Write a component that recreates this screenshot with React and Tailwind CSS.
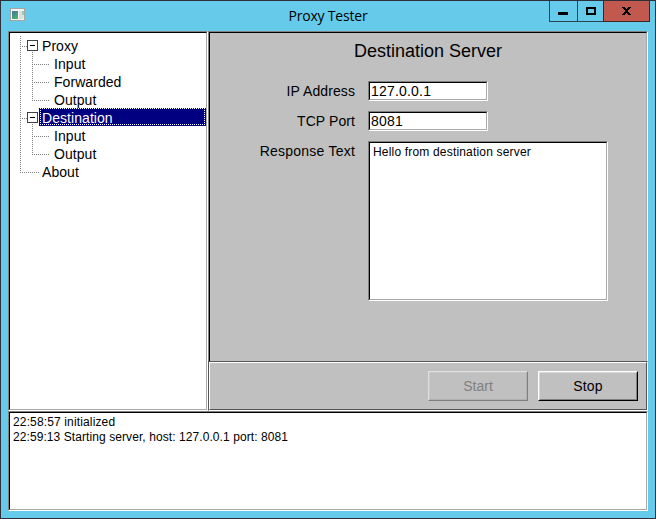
const tree = [
  { label: 'Proxy', level: 0, open: true },
  { label: 'Input', level: 1 },
  { label: 'Forwarded', level: 1 },
  { label: 'Output', level: 1, last: true },
  { label: 'Destination', level: 0, open: true, selected: true },
  { label: 'Input', level: 1 },
  { label: 'Output', level: 1, last: true },
  { label: 'About', level: 0, last: true },
];

const sunken =
  'border border-t-[#808080] border-l-[#808080] border-r-white border-b-white';
const sunkenInner =
  'h-full w-full border border-t-black border-l-black border-r-[#a9a9a9] border-b-[#a9a9a9]';

function Sunken({ className, inner, children }) {
  return (
    <div className={`${sunken} ${className}`}>
      <div className={`${sunkenInner} ${inner}`}>{children}</div>
    </div>
  );
}

// Dotted guide lines and expander box for one 18px tree row
function Guides({ item, index }) {
  const child = item.level === 1;
  const rootLine = index < 7;
  return (
    <svg
      className={child ? 'h-[18px] w-[40px] shrink-0' : 'h-[18px] w-[29px] shrink-0'}
      shapeRendering="crispEdges"
      fill="none"
      stroke="#808080"
      strokeDasharray="1 1"
    >
      <path d={rootLine ? 'M10.5 0V18' : 'M10.5 0V11'} />
      {child && <path d={item.last ? 'M22.5 0V11' : 'M22.5 0V18'} />}
      {child ? (
        <path d="M22 10.5H40" />
      ) : item.open ? (
        <>
          <path d="M10 10.5H17" />
          <path d="M22.5 16V18" />
          <rect x="17.5" y="4.5" width="10" height="10" fill="white" stroke="#404040" strokeDasharray="none" />
          <path d="M20 9.5H25" stroke="black" strokeDasharray="none" />
        </>
      ) : (
        <path d="M10 10.5H29" />
      )}
    </svg>
  );
}

function TreeRow({ item, index }) {
  return (
    <li className="flex h-[18px]">
      <Guides item={item} index={index} />
      {item.selected ? (
        <div className="relative flex-1 bg-[#000080] pl-[3px] leading-[20px] text-white">
          {item.label}
          <svg
            className="absolute inset-0 h-[18px] w-full"
            shapeRendering="crispEdges"
            stroke="white"
            strokeDasharray="1 1"
          >
            <path d="M1 0.5H166" />
            <path d="M1 16.5H166" />
            <path d="M1.5 0V17" />
            <path d="M165.5 0V17" />
          </svg>
        </div>
      ) : (
        <div className={item.level === 1 ? 'pl-[4px] leading-[20px]' : 'pl-[3px] leading-[20px]'}>{item.label}</div>
      )}
    </li>
  );
}

function Field({ label, labelClass = '', children }) {
  return (
    <div className="flex">
      <div className={`h-[20px] w-[145px] text-right leading-[20px] ${labelClass}`}>{label}</div>
      <div className="ml-[13px]">{children}</div>
    </div>
  );
}

export default function App() {
  return (
    <div
      className="flex h-[519px] w-[656px] flex-col border border-[#2d2f3b] bg-[#66cbea] px-[7px] pb-[7px] text-[14px] text-black"
      style={{ fontFamily: '"Liberation Sans", Arial, sans-serif' }}
    >
      <header className="relative h-[30px] shrink-0">
        <svg className="absolute left-[1px] top-[7px] h-[14px] w-[17px]" shapeRendering="crispEdges">
          <defs>
            <linearGradient id="pane" x1="0" y1="0" x2="0.6" y2="1">
              <stop offset="0" stopColor="#42769c" />
              <stop offset="1" stopColor="#4faa72" />
            </linearGradient>
          </defs>
          <rect x="1" y="0" width="15" height="13" fill="#a3a6a5" />
          <rect x="2" y="1" width="13" height="11" fill="#f4f4f2" />
          <rect x="3" y="3" width="6" height="8" fill="url(#pane)" />
          <rect x="10" y="3" width="3" height="8" fill="#dcdedc" />
          <rect x="13" y="3" width="2" height="4" fill="#9bcbb8" />
          <rect x="13" y="7" width="2" height="4" fill="#dfe5e2" />
        </svg>
        <div
          className="text-center text-[14px] leading-[30px] tracking-[-0.2px]"
          style={{ fontFamily: '"Segoe UI", "Open Sans", sans-serif' }}
        >
          Proxy Tester
        </div>
        <div className="absolute -right-[2px] top-0 flex h-[21px]">
          <div className="w-[28px] border-b border-l border-[#27444f]">
            <svg className="h-[20px] w-[27px]" shapeRendering="crispEdges">
              <rect x="8" y="11" width="10" height="3" />
            </svg>
          </div>
          <div className="w-[26px] border-b border-l border-[#27444f]">
            <svg className="h-[20px] w-[25px]" shapeRendering="crispEdges">
              <rect x="9" y="7" width="8" height="6" fill="none" stroke="black" strokeWidth="2" />
            </svg>
          </div>
          <div className="w-[47px] border-x border-b border-[#45231f] bg-[#c2594f]">
            <svg className="h-[20px] w-[45px]" shapeRendering="crispEdges">
              <path d="M18 6h3v1h1v1h1v-1h1v-1h3v1h-1v1h-1v1h-1v2h1v1h1v1h1v1h-3v-1h-1v-1h-1v1h-1v1h-3v-1h1v-1h1v-1h1v-2h-1v-1h-1v-1h-1z" />
            </svg>
          </div>
        </div>
      </header>

      <main className="flex h-[380px] shrink-0 bg-[#c0c0c0]">
        <Sunken className="h-[380px] w-[200px]" inner="bg-white pt-[3px] tracking-[0.06px]">
          <ul>
            {tree.map((item, i) => (
              <TreeRow key={i} item={item} index={i} />
            ))}
          </ul>
        </Sunken>
        <div className="flex w-[440px] flex-col">
          <div className="h-[330px] border border-b-0 border-l-[#808080] border-r-white border-t-[#808080]">
            <div className="h-full border border-b-0 border-l-black border-r-[#a9a9a9] border-t-black">
              <h1 className="pt-[8px] text-center text-[18px] leading-[20px]">Destination Server</h1>
              <div className="flex flex-col gap-[10px] pt-[20px]">
                <Field label="IP Address" labelClass="tracking-[0.1px]">
                  <Sunken className="h-[20px] w-[120px]" inner="bg-white pl-px leading-[17px] tracking-[0.2px]">127.0.0.1</Sunken>
                </Field>
                <Field label="TCP Port" labelClass="tracking-[0.08px]">
                  <Sunken className="h-[20px] w-[120px]" inner="bg-white pl-px leading-[17px] tracking-[0.2px]">8081</Sunken>
                </Field>
                <Field label="Response Text" labelClass="tracking-[0.23px]">
                  <Sunken className="h-[160px] w-[240px]" inner="bg-white pl-[3px] pt-[2px] text-[12px] leading-[15px] tracking-[0.18px]">
                    Hello from destination server
                  </Sunken>
                </Field>
              </div>
            </div>
          </div>
          <div className="h-[50px] border border-b-white border-l-[#555] border-r-white border-t-[#555]">
            <div className="flex h-full justify-end gap-[10px] border border-b-[#555] border-l-white border-r-[#555] border-t-white pr-[8px] pt-[8px]">
              <button className="h-[30px] w-[100px] border border-b-[#808080] border-l-[#e0e0e0] border-r-[#808080] border-t-[#e0e0e0] text-[#808080]">
                <span className="flex h-full items-center justify-center border border-b-[#b0b0b0] border-l-[#c8c8c8] border-r-[#b0b0b0] border-t-[#c8c8c8]">
                  Start
                </span>
              </button>
              <button className="h-[30px] w-[100px] border border-b-black border-l-white border-r-black border-t-white">
                <span className="flex h-full items-center justify-center border border-b-[#808080] border-l-[#d8d8d8] border-r-[#808080] border-t-[#d8d8d8] tracking-[0.15px]">
                  Stop
                </span>
              </button>
            </div>
          </div>
        </div>
      </main>

      <Sunken className="h-[100px] shrink-0" inner="bg-white pl-[3px] pt-[2px] text-[12px] leading-[15px]">
        <p className="tracking-[0.14px]">22:58:57 initialized</p>
        <p className="tracking-[0.08px]">22:59:13 Starting server, host: 127.0.0.1 port: 8081</p>
      </Sunken>
    </div>
  );
}
